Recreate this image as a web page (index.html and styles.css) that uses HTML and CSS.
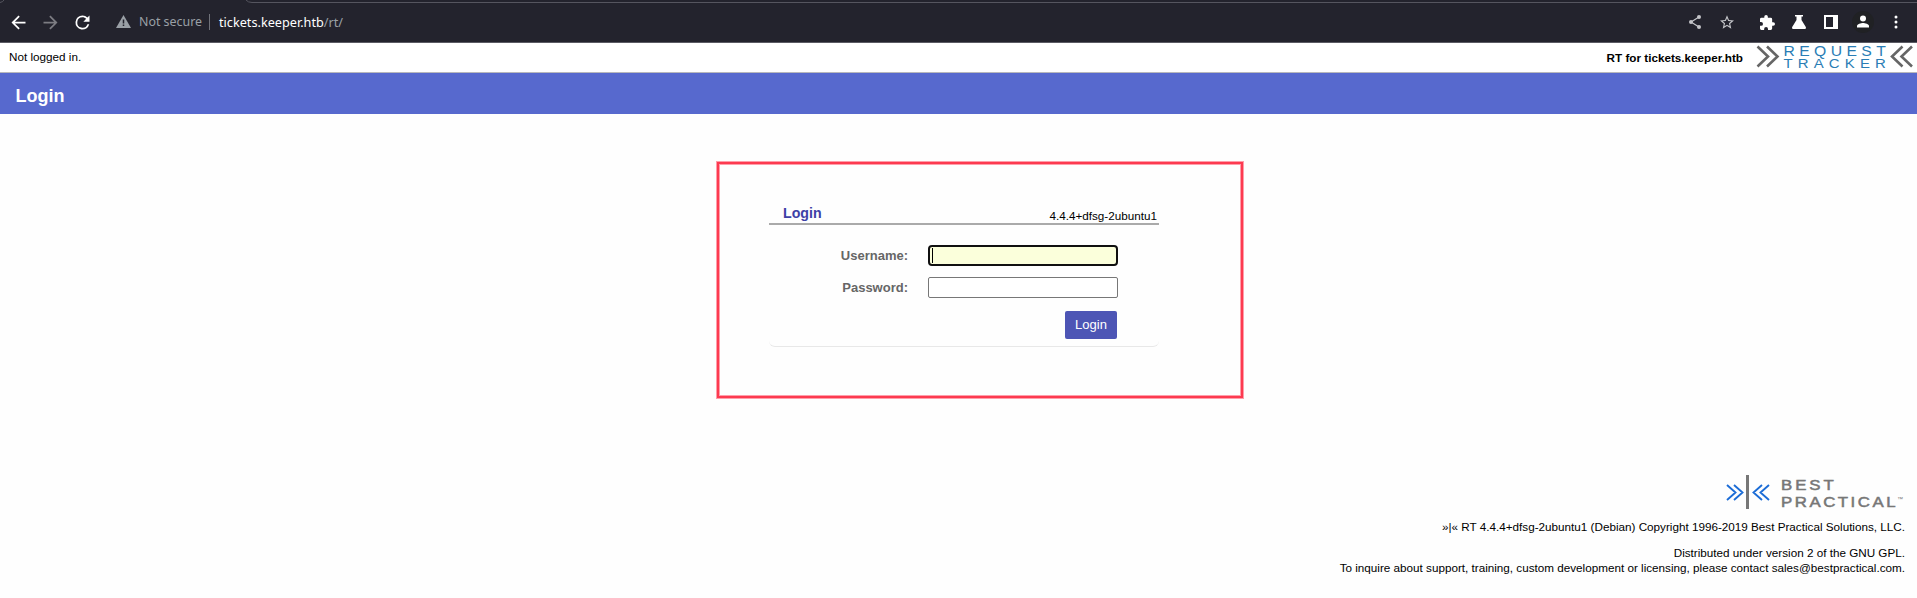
FILE: index.html
```html
<!DOCTYPE html>
<html lang="en">
<head>
<meta charset="utf-8">
<title>Login</title>
<link rel="stylesheet" href="styles.css">
</head>
<body>
<div class="chrome">
  <svg class="tab-edge" width="1917" height="4" viewBox="0 0 1917 4"><path d="M0 2.500Q3 2 4 0M246 0Q248 2.500 252 2.500H1917" fill="none" stroke="#55555f"/></svg>
  <nav class="nav">
    <svg class="ico" viewBox="0 0 24 24"><path d="M20 11H7.83l5.59-5.59L12 4l-8 8 8 8 1.41-1.41L7.83 13H20z"/></svg>
    <svg class="ico dim" viewBox="0 0 24 24"><path d="M12 4l-1.41 1.41L16.17 11H4v2h12.17l-5.58 5.59L12 20l8-8z"/></svg>
    <svg class="ico" viewBox="0 0 24 24"><path d="M17.65 6.35A7.96 7.96 0 0 0 12 4a8 8 0 1 0 7.73 10h-2.08A6 6 0 1 1 12 6c1.66 0 3.14.69 4.22 1.78L13 11h7V4z"/></svg>
  </nav>
  <div class="address">
    <svg class="warn" viewBox="0 0 15 13"><path fill="#9aa0a6" d="M7.5 0L15 13H0z"/><path stroke="#23232d" stroke-width="1.5" d="M7.5 4.5v4M7.5 9.5v1.5"/></svg>
    <span class="insecure">Not secure</span>
    <span class="rule"></span>
    <span class="url">tickets.keeper.htb<i>/rt/</i></span>
  </div>
  <div class="tools">
    <svg class="t-share" viewBox="0 0 12 14"><g fill="#c4c5c9"><circle cx="10" cy="2" r="2"/><circle cx="2" cy="7" r="2"/><circle cx="10" cy="12" r="2"/></g><path d="M10 2L2 7l8 5" fill="none" stroke="#c4c5c9" stroke-width="1.2"/></svg>
    <svg class="t-star" viewBox="2 2 20 19"><path fill="#c4c5c9" d="M22 9.24l-7.19-.62L12 2 9.19 8.63 2 9.24l5.46 4.73L5.82 21 12 17.27 18.18 21l-1.63-7.03zM12 15.4l-3.76 2.27 1-4.28-3.32-2.88 4.38-.38L12 6.1l1.71 4.04 4.38.38-3.32 2.88 1 4.28z"/></svg>
    <svg class="t-puzzle" viewBox="2 1 21 21"><path fill="#fff" d="M20.5 11H19V7a2 2 0 0 0-2-2h-4V3.500a2.500 2.500 0 0 0-5 0V5H4a2 2 0 0 0-2 2v3.800h1.500a2.700 2.700 0 0 1 0 5.400H2V20a2 2 0 0 0 2 2h3.800v-1.500a2.700 2.700 0 0 1 5.400 0V22H17a2 2 0 0 0 2-2v-4h1.500a2.500 2.500 0 0 0 0-5z"/></svg>
    <svg class="t-flask" viewBox="0 0 14 14"><path fill="#fff" d="M3 0h8v1.500H9.500V5l4.300 7q.6 2-1 2H1.200q-1.600 0-1-2l4.300-7V1.500H3z"/></svg>
    <svg class="t-panel" viewBox="0 0 14 14"><path fill="#fff" fill-rule="evenodd" d="M0 0h14v14H0zM2 2v10h7V2z"/></svg>
    <svg class="t-user" viewBox="0 0 22 22"><circle cx="11" cy="11" r="11" fill="#202124"/><circle cx="11" cy="7.500" r="3" fill="#fff"/><path fill="#fff" d="M5 16.500v-1.500c0-2 4-3 6-3s6 1 6 3v1.500z"/></svg>
    <svg class="t-more" viewBox="0 0 4 14"><g fill="#fff"><circle cx="2" cy="2" r="1.500"/><circle cx="2" cy="7" r="1.500"/><circle cx="2" cy="12" r="1.500"/></g></svg>
  </div>
</div>
<header class="top">
  <span class="status">Not logged in.</span>
  <span class="instance">RT for tickets.keeper.htb</span>
  <svg class="rt-logo" width="158" height="29" viewBox="0 0 158 29">
    <g fill="none" stroke="#666" stroke-width="2.600"><path d="M1.500 3.500l10.500 10-10.500 10M11 3.500l10.500 10-10.500 10M146.500 3.500l-10.500 10 10.500 10M156 3.500l-10.500 10 10.500 10"/></g>
    <g class="rt-word"><text transform="translate(27.500 13.300) scale(1.050 1)" textLength="97.500">REQUEST</text><text class="low" transform="translate(27.500 25) scale(1.150 1)" textLength="89">TRACKER</text></g>
  </svg>
</header>
<div class="title"><h1>Login</h1></div>
<main>
  <section class="frame">
    <div class="box">
      <div class="box-head"><h2>Login</h2><span>4.4.4+dfsg-2ubuntu1</span></div>
      <form>
        <div class="row"><label for="user">Username:</label><div class="field focus" id="user"><span class="caret"></span></div></div>
        <div class="row"><label for="pass">Password:</label><div class="field" id="pass"></div></div>
        <div class="actions"><button type="button">Login</button></div>
      </form>
    </div>
  </section>
</main>
<footer>
  <svg class="bp-logo" width="180" height="35" viewBox="0 0 180 35">
    <g fill="none" stroke="#1b6cd6" stroke-width="1.900"><path d="M2 10l8.500 7.500L2 25M9 10l8.500 7.500L9 25M37 10l-8.500 7.500L37 25M44 10l-8.500 7.500L44 25"/></g>
    <path d="M22.500 0v34" stroke="#777" stroke-width="3"/>
    <g class="bp-word"><text transform="translate(56 15) scale(1.200 1)" textLength="44">BEST</text><text transform="translate(56 32) scale(1.200 1)" textLength="95.500">PRACTICAL</text><text class="tm" x="172" y="26" textLength="6">™</text></g>
  </svg>
  <p class="copy">»|« RT 4.4.4+dfsg-2ubuntu1 (Debian) Copyright 1996-2019 Best Practical Solutions, LLC.</p>
  <p>Distributed under version 2 of the GNU GPL.<br>To inquire about support, training, custom development or licensing, please contact sales@bestpractical.com.</p>
</footer>
</body>
</html>
```
FILE: styles.css
```css
* { box-sizing: border-box; }
body { margin: 0; width: 1917px; height: 598px; overflow: hidden; background: #fefefe; color: #000; font: 11.7px/15px "Liberation Sans", Arial, sans-serif; }
h1, h2, p { margin: 0; }
svg { display: block; flex: none; }
.chrome { position: relative; display: flex; align-items: center; height: 43px; padding: 2px 19px 0 8px; background: #23232d; border-bottom: 1px solid #5b5b64; }
.tab-edge { position: absolute; left: 0; top: 0; }
.nav { display: flex; gap: 11px; }
.ico { width: 21px; height: 21px; fill: #fff; }
.dim { fill: #7c7c82; }
.address { display: flex; align-items: center; margin-left: 23px; font: 12.7px/18px "Noto Sans", sans-serif; }
.warn { width: 15px; height: 13px; margin-top: -1px; }
.insecure { width: 63px; margin-left: 8px; color: #9aa0a6; font-size: 12.4px; white-space: nowrap; }
.rule { width: 1px; height: 16px; margin: 0 9px 0 7px; background: #70727a; }
.url { color: #fff; }
.url i { font-style: normal; color: #9aa0a6; }
.tools { display: flex; align-items: center; margin-left: auto; }
.t-share { width: 12px; height: 14px; margin-right: 19px; }
.t-star { width: 14px; height: 14px; margin-right: 26px; }
.t-puzzle { width: 15px; height: 15px; margin-right: 17px; }
.t-flask { width: 14px; height: 14px; margin-right: 18px; }
.t-panel { width: 14px; height: 14px; margin-right: 14px; }
.t-user { width: 22px; height: 22px; margin-right: 20px; }
.t-more { width: 4px; height: 14px; }
.top { display: flex; align-items: center; height: 30px; padding-left: 9px; background: #fff; border-bottom: 1px solid #b8b8bc; }
.status { margin-top: -2px; }
.instance { margin: 0 13px 0 auto; font-weight: bold; }
.rt-logo { margin-right: 3px; }
.rt-word { fill: #2a7db5; font: 15px "Liberation Sans", Arial, sans-serif; }
.low { font-size: 13px; }
.title { display: flex; align-items: center; height: 41px; padding-left: 15.5px; background: #5769ce; color: #fff; }
h1 { padding-top: 5px; font-size: 18px; line-height: 22px; }
main { display: flex; height: 361px; padding: 47px 0 0 716px; }
.frame { width: 528px; height: 238px; padding: 37px 0 0 50px; border: 3px solid #fd3a50; outline: 1px solid #ff9eaa; outline-offset: -1px; box-shadow: inset 0 0 0 1px #ff9eaa; }
.box { width: 390px; height: 146px; border-bottom: 1px solid #e8e8e8; border-radius: 0 0 6px 6px; }
.box-head { display: flex; justify-content: space-between; height: 24px; padding: 3px 2px 0 14px; border-bottom: 2px solid #aaa; }
h2 { color: #3d41a6; font-size: 14.2px; line-height: 18px; }
.box-head span { padding-top: 4px; }
form { display: flex; flex-direction: column; padding-top: 20px; }
.row { display: flex; align-items: center; height: 21px; margin-bottom: 11px; }
label { width: 139px; margin-right: 20px; color: #666; font-size: 13px; font-weight: bold; text-align: right; }
.field { width: 190px; height: 21px; border: 1px solid #777; border-radius: 2px; background: #fff; }
.focus { padding: 1px 2px; border: 2px solid #101010; border-radius: 4px; background: #fbffdb; }
.caret { display: block; width: 1px; height: 15px; background: #000; }
.actions { display: flex; padding: 2px 0 0 296px; }
button { width: 52px; height: 28px; padding: 0 0 1px; border: 0; border-radius: 2px; background: #4d55b5; color: #fff; font: 13px "Liberation Sans", Arial, sans-serif; }
footer { display: flex; flex-direction: column; align-items: flex-end; padding-right: 12px; text-align: right; }
.bp-logo { margin-bottom: 9px; }
.bp-word { fill: #777; stroke: #777; stroke-width: .5px; font: 14px "Liberation Sans", Arial, sans-serif; }
.tm { font-size: 6px; stroke: none; }
.copy { margin-bottom: 11px; }
```
